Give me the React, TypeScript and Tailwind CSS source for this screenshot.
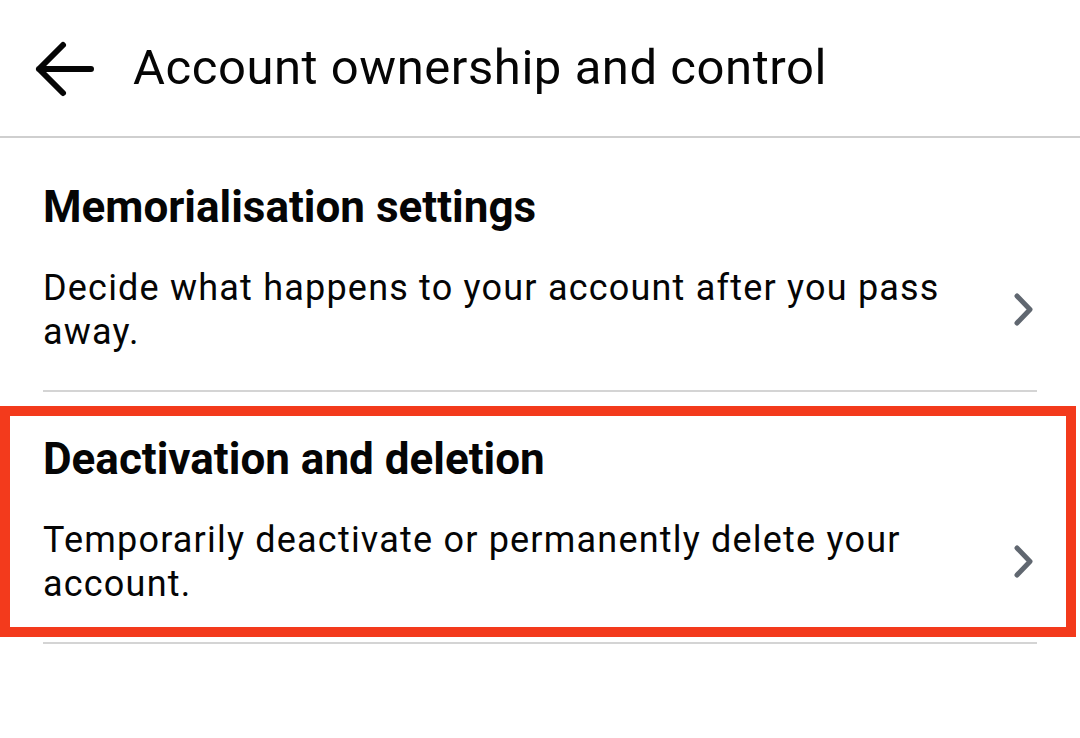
interface Item {
  title: string
  desc: string
}

function BackArrow() {
  return (
    <svg width="62" height="58" viewBox="0 0 62 58" className="shrink-0">
      <path d="M5 29 H57 M29 5 L5 29 L29 53" fill="none" stroke="#050505" strokeWidth="6" strokeLinecap="round" strokeLinejoin="round" />
    </svg>
  )
}

function Chevron() {
  return (
    <svg width="26" height="36" viewBox="0 0 26 36" className="shrink-0">
      <path d="M6 4 L19 17.5 L6 31" fill="none" stroke="#606770" strokeWidth="5" strokeLinecap="round" strokeLinejoin="round" />
    </svg>
  )
}

function Row({ item }: { item: Item }) {
  return (
    <div>
      <p className="text-[44px] leading-[52px] font-bold text-[#050505]">{item.title}</p>
      <div className="mt-[33px] flex items-center justify-between">
        <p className="text-[36px] leading-[44px] tracking-[1.2px] text-[#050505] w-[920px]">{item.desc}</p>
        <Chevron />
      </div>
    </div>
  )
}

export default function App() {
  return (
    <div className="w-[1080px] h-[738px] bg-white overflow-hidden" style={{ fontFamily: 'Roboto, "Noto Sans", sans-serif' }}>
      <div className="h-[138px] flex items-center border-b-2 border-[#cfcfcf]">
        <div className="ml-[34px] mt-[2px]">
          <BackArrow />
        </div>
        <h1 className="ml-[37px] text-[49px] leading-[56px] tracking-[0.55px] text-[#050505]">Account ownership and control</h1>
      </div>

      <div className="mx-[43px] pt-[43px] pb-[36px] border-b-2 border-[#d4d4d4]">
        <Row item={{ title: 'Memorialisation settings', desc: 'Decide what happens to your account after you pass away.' }} />
      </div>

      <div className="mt-[14px] w-[1076px] border-[10px] border-[#f33a1c] pl-[33px] pr-[29px] pt-[17px] pb-[21px]">
        <Row item={{ title: 'Deactivation and deletion', desc: 'Temporarily deactivate or permanently delete your account.' }} />
      </div>

      <div className="mx-[43px] mt-[5px] h-[2px] bg-[#d4d4d4]" />
    </div>
  )
}
